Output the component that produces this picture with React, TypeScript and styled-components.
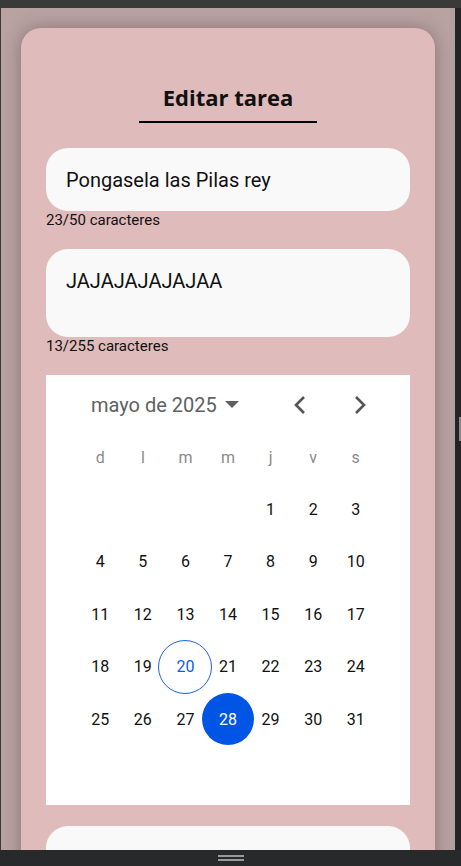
import React from 'react'
import styled, { createGlobalStyle } from 'styled-components'

const Global = createGlobalStyle`
  html, body {
    margin: 0;
    padding: 0;
    overflow: hidden;
    background: #28292b;
  }
  * { box-sizing: border-box; }
`

// frame

const Frame = styled.div`
  width: 461px;
  height: 866px;
  display: flex;
  flex-direction: column;
  background: #3a3a3a;
`
const TopBar = styled.div`
  height: 8px;
  background: #3a3a3a;
`
const Middle = styled.div`
  flex: 1;
  display: flex;
  min-height: 0;
  padding-left: 1px;
`
const Stage = styled.div`
  flex: 1;
  background: #b8a2a2;
  overflow: hidden;
  padding: 20px 15px 0 20px;
`
const Track = styled.div`
  width: 5px;
  background: #b0a0a0;
`
const Edge = styled.div`
  width: 6px;
  background: #232426;
  display: flex;
  align-items: center;
  justify-content: flex-end;
`
const EdgeGrip = styled.div`
  width: 2px;
  height: 24px;
  background: #8a8a8a;
`
const BottomBar = styled.div`
  height: 16px;
  background: #28292b;
  display: flex;
  flex-direction: column;
  align-items: center;
  justify-content: center;
  gap: 2px;
`
const GripLine = styled.div`
  width: 26px;
  height: 2px;
  background: #9a9a9a;
`

// card

const Card = styled.div`
  background: #e0bbbb;
  border-radius: 20px;
  box-shadow: 0 0 18px rgba(60, 30, 30, 0.35);
  padding: 55px 25px 40px;
  display: flex;
  flex-direction: column;
`
const Title = styled.h1`
  align-self: center;
  margin: 0 0 25px;
  padding: 0 24px 10px;
  border-bottom: 2px solid #000;
  font-family: "Open Sans", "Noto Sans", sans-serif;
  font-weight: 700;
  font-size: 22px;
  line-height: 28px;
  color: #111;
`
const Field = styled.div`
  display: flex;
  flex-direction: column;
  margin-bottom: 21px;
`
const TextInput = styled.input`
  height: 63px;
  border: none;
  outline: none;
  border-radius: 22px;
  background: #f9f9f9;
  padding: 0 20px;
  font-family: Roboto, "Liberation Sans", sans-serif;
  font-size: 20px;
  color: #111;
`
const TextArea = styled.textarea`
  height: 88px;
  border: none;
  outline: none;
  resize: none;
  border-radius: 22px;
  background: #f9f9f9;
  padding: 20px 20px;
  font-family: Roboto, "Liberation Sans", sans-serif;
  font-size: 20px;
  color: #111;
  display: block;
`
const Counter = styled.div`
  margin-top: 1px;
  font-family: Roboto, "Liberation Sans", sans-serif;
  font-size: 15px;
  line-height: 16px;
  color: #111;
`

// calendar

const Calendar = styled.div`
  background: #fff;
  height: 430px;
  padding-top: 4px;
  margin-bottom: 21px;
`
const CalHeader = styled.div`
  height: 52px;
  display: flex;
  align-items: center;
  padding-left: 45px;
  font-family: Roboto, "Liberation Sans", sans-serif;
  color: #616161;
`
const MonthLabel = styled.div`
  font-size: 20px;
  display: flex;
  align-items: center;
  gap: 8px;
  width: 179px;
`
const NavBtn = styled.div`
  width: 60px;
  display: flex;
  justify-content: center;
  align-items: center;
`
const Grid = styled.div`
  display: grid;
  grid-template-columns: repeat(7, 1fr);
  grid-auto-rows: 52.4px;
  padding: 0 33px;
  font-family: Roboto, "Liberation Sans", sans-serif;
`
const WeekDay = styled.div`
  display: flex;
  align-items: center;
  justify-content: center;
  font-size: 16px;
  color: #8a8a8a;
`
const Day = styled.div<{ $mode?: 'today' | 'selected' }>`
  display: flex;
  align-items: center;
  justify-content: center;
  font-size: 16px;
  position: relative;
  color: ${p => (p.$mode === 'selected' ? '#fff' : p.$mode === 'today' ? '#0a5ce6' : '#111')};
  z-index: 0;
  &::before {
    content: '';
    display: ${p => (p.$mode ? 'block' : 'none')};
    position: absolute;
    width: 52px;
    height: 52px;
    left: 50%;
    top: 50%;
    transform: translate(-50%, -50%);
    border-radius: 50%;
    z-index: -1;
    background: ${p => (p.$mode === 'selected' ? '#0055e5' : 'transparent')};
    border: ${p => (p.$mode === 'today' ? '1px solid #1a62e6' : 'none')};
  }
`

const weekDays = ['d', 'l', 'm', 'm', 'j', 'v', 's']

const App: React.FC = () => {
  const cells: (number | null)[] = [null, null, null, null]
  for (let i = 1; i <= 31; i++) cells.push(i)

  return (
    <>
      <Global />
      <Frame>
        <TopBar />
        <Middle>
          <Stage>
            <Card>
              <Title>Editar tarea</Title>
              <Field>
                <TextInput defaultValue="Pongasela las Pilas rey" />
                <Counter>23/50 caracteres</Counter>
              </Field>
              <Field>
                <TextArea defaultValue="JAJAJAJAJAJAA" />
                <Counter>13/255 caracteres</Counter>
              </Field>
              <Calendar>
                <CalHeader>
                  <MonthLabel>
                    mayo de 2025
                    <svg width="14" height="8" viewBox="0 0 14 8">
                      <path d="M0 0h14L7 7z" fill="#5f5f5f" />
                    </svg>
                  </MonthLabel>
                  <NavBtn>
                    <svg width="14" height="20" viewBox="0 0 14 20">
                      <path d="M11 2L3 10l8 8" stroke="#555" strokeWidth="2.6" fill="none" />
                    </svg>
                  </NavBtn>
                  <NavBtn>
                    <svg width="14" height="20" viewBox="0 0 14 20">
                      <path d="M3 2l8 8-8 8" stroke="#555" strokeWidth="2.6" fill="none" />
                    </svg>
                  </NavBtn>
                </CalHeader>
                <Grid>
                  {weekDays.map((d, i) => (
                    <WeekDay key={'w' + i}>{d}</WeekDay>
                  ))}
                  {cells.map((n, i) => (
                    <Day key={i} $mode={n === 20 ? 'today' : n === 28 ? 'selected' : undefined}>
                      {n ?? ''}
                    </Day>
                  ))}
                </Grid>
              </Calendar>
              <Field>
                <TextInput defaultValue="" />
              </Field>
            </Card>
          </Stage>
          <Track />
          <Edge>
            <EdgeGrip />
          </Edge>
        </Middle>
        <BottomBar>
          <GripLine />
          <GripLine />
        </BottomBar>
      </Frame>
    </>
  )
}

export default App
